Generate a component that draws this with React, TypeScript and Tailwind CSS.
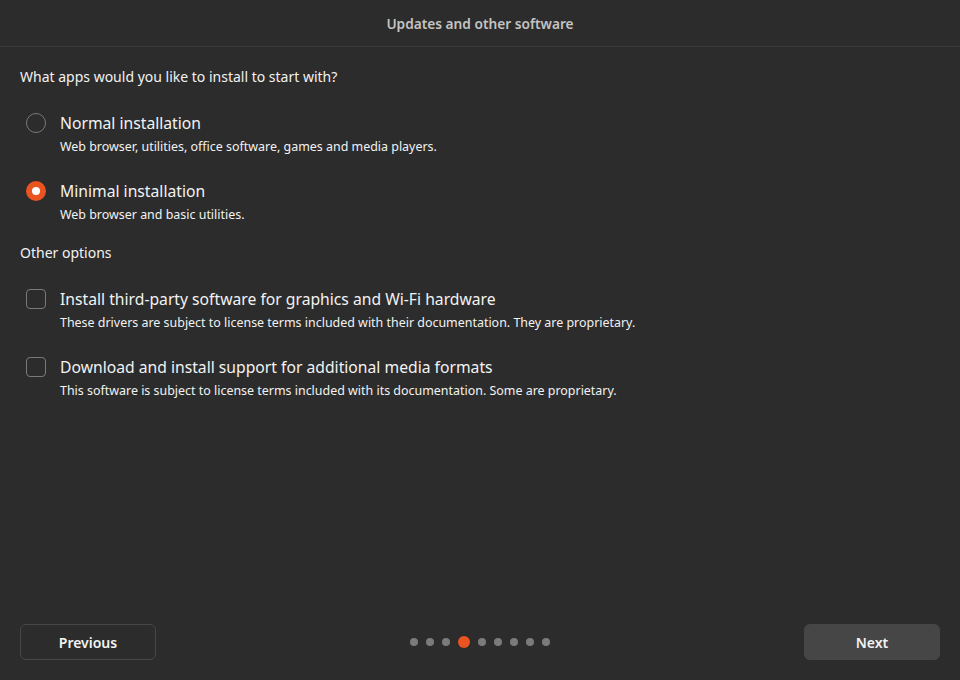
import React from "react";

const font = { fontFamily: '"Noto Sans", "Liberation Sans", sans-serif' };

function Radio({ checked }: { checked: boolean }) {
  return checked ? (
    <div className="w-5 h-5 rounded-full bg-[#e95420] flex items-center justify-center shrink-0">
      <div className="w-2 h-2 rounded-full bg-white" />
    </div>
  ) : (
    <div className="w-5 h-5 rounded-full border border-[#7a7a7a] shrink-0" />
  );
}

function Check() {
  return <div className="w-5 h-5 rounded-[4px] border border-[#7a7a7a] shrink-0" />;
}

function Option({ control, title, desc }: { control: React.ReactNode; title: string; desc: string }) {
  return (
    <div className="flex pl-[6px]">
      <div className="pt-[1px] w-[34px]">{control}</div>
      <div className="flex flex-col">
        <div className="text-[15.7px] leading-[22px] text-[#f2f2f2]">{title}</div>
        <div className="text-[12.45px] leading-[18px] text-[#f2f2f2] mt-[4px]">{desc}</div>
      </div>
    </div>
  );
}

export default function App() {
  const dots = [0, 1, 2, 3, 4, 5, 6, 7, 8];
  return (
    <div style={font} className="w-[960px] h-[680px] bg-[#2c2c2c] flex flex-col text-[#f2f2f2]">
      <div className="h-[47px] pt-[2px] border-b border-[#383838] flex items-center justify-center">
        <span className="text-[13.7px] font-semibold text-[#c3c3c3]">Updates and other software</span>
      </div>
      <div className="flex-1 px-5 pt-[19px] flex flex-col">
        <div className="text-[14px] leading-[22px]">What apps would you like to install to start with?</div>
        <div className="mt-[24px] flex flex-col gap-[24px]">
          <Option control={<Radio checked={false} />} title="Normal installation" desc="Web browser, utilities, office software, games and media players." />
          <Option control={<Radio checked />} title="Minimal installation" desc="Web browser and basic utilities." />
        </div>
        <div className="mt-[18px] text-[14px] leading-[22px]">Other options</div>
        <div className="mt-[24px] flex flex-col gap-[24px]">
          <Option control={<Check />} title="Install third-party software for graphics and Wi-Fi hardware" desc="These drivers are subject to license terms included with their documentation. They are proprietary." />
          <Option control={<Check />} title="Download and install support for additional media formats" desc="This software is subject to license terms included with its documentation. Some are proprietary." />
        </div>
      </div>
      <div className="h-[56px] px-5 flex items-start justify-between">
        <button className="w-[136px] h-[36px] rounded-[6px] border border-[#474747] text-[14px] font-semibold text-[#f2f2f2]">Previous</button>
        <div className="flex items-center gap-2 h-[36px]">
          {dots.map((i) =>
            i === 3 ? (
              <div key={i} className="w-3 h-3 rounded-full bg-[#e95420]" />
            ) : (
              <div key={i} className="w-2 h-2 rounded-full bg-[#7b7b7b]" />
            )
          )}
        </div>
        <button className="w-[136px] h-[36px] rounded-[6px] bg-[#464646] text-[14px] font-semibold text-[#f2f2f2]">Next</button>
      </div>
    </div>
  );
}
